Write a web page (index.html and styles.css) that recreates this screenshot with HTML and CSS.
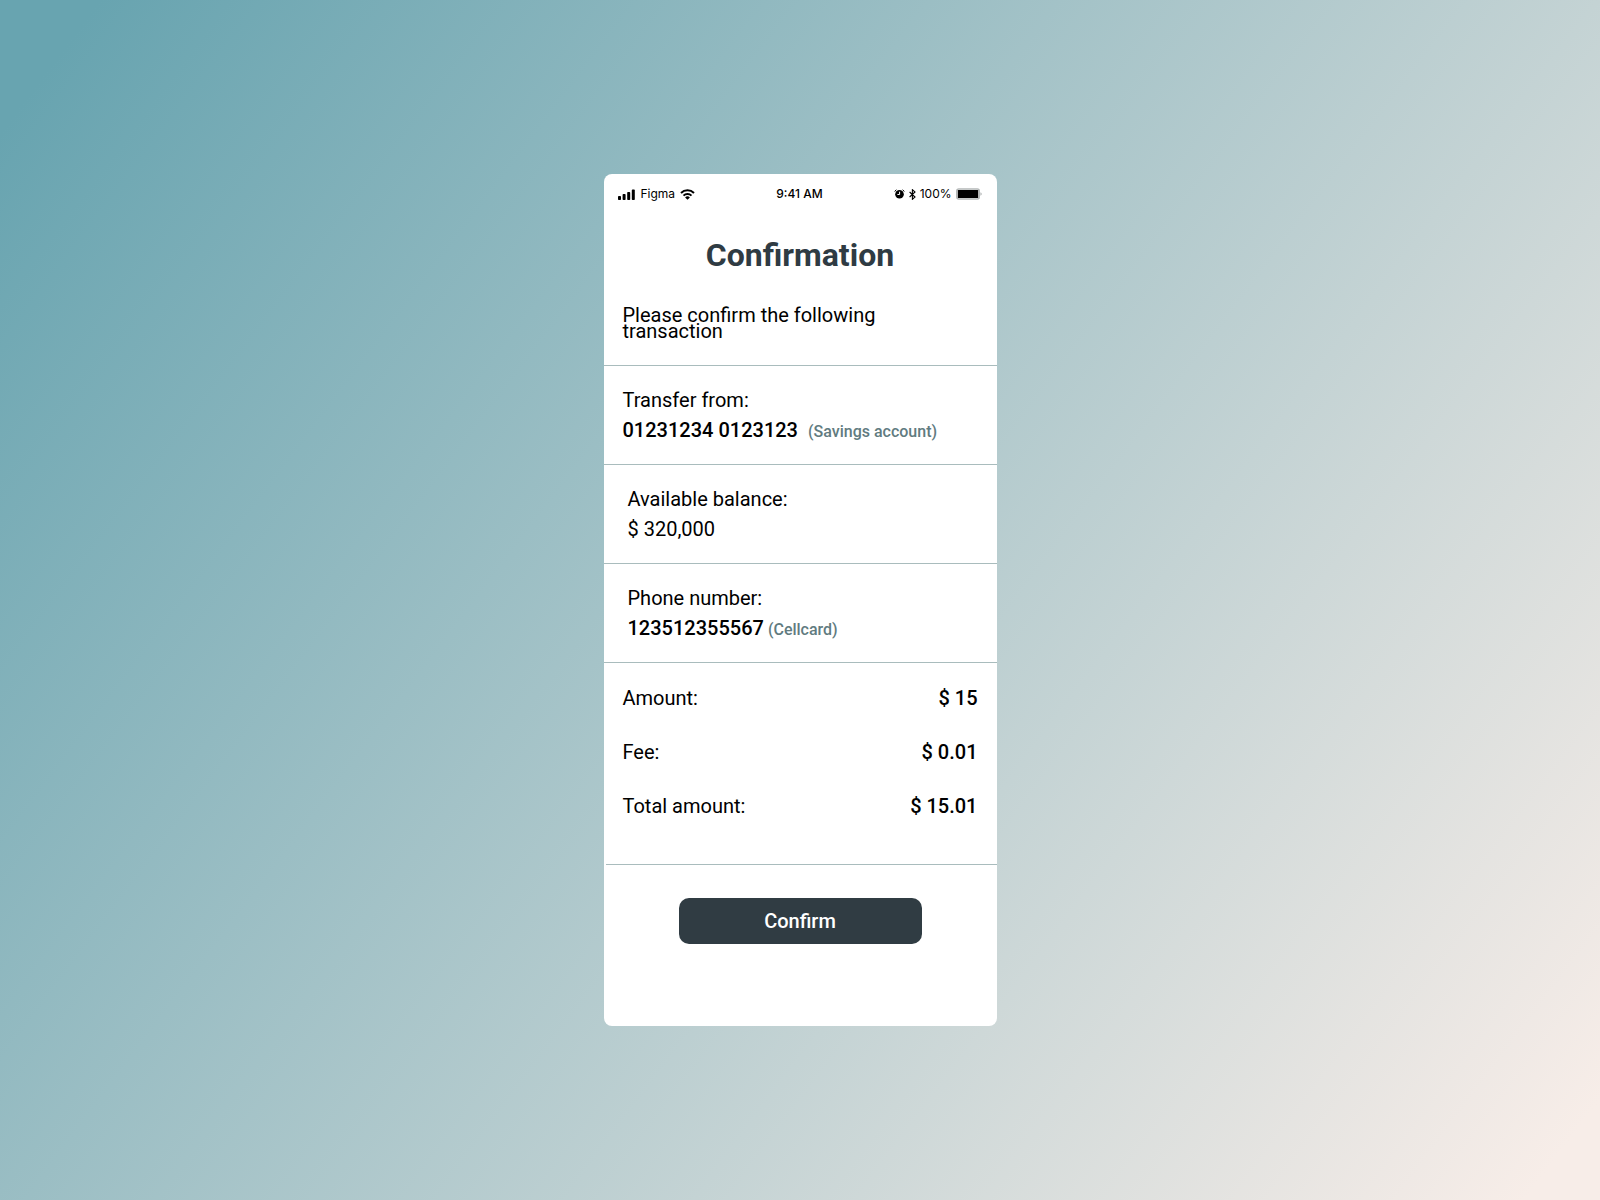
FILE: index.html
```html
<!DOCTYPE html>
<html lang="en">

<head>
    <meta charset="UTF-8">
    <meta name="viewport" content="width=device-width, initial-scale=1.0">
    <title>Confirmation</title>
    <link rel="stylesheet" href="styles.css">
</head>

<body>
    <main class="phone">
        <header class="status-bar">
            <div class="status-left">
                <svg class="signal" width="17" height="11" viewBox="0 0 17 11">
                    <rect x="0" y="7" width="3" height="4" rx="0.8" />
                    <rect x="4.6" y="5" width="3" height="6" rx="0.8" />
                    <rect x="9.2" y="3" width="3" height="8" rx="0.8" />
                    <rect x="13.8" y="0.6" width="3" height="10.4" rx="0.8" />
                </svg>
                <span>Figma</span>
                <svg class="wifi" width="15" height="11" viewBox="0 0 15 11">
                    <path d="M1 4 A9.2 9.2 0 0 1 14 4" />
                    <path d="M3.5 6.6 A5.7 5.7 0 0 1 11.5 6.6" />
                    <path class="dot" d="M5.1 8.4 A3.4 3.4 0 0 1 9.9 8.4 L7.5 10.8 Z" />
                </svg>
            </div>
            <div class="status-time">9:41 AM</div>
            <div class="status-right">
                <svg class="alarm" width="11" height="10" viewBox="0 0 11 10">
                    <circle cx="5.5" cy="5.3" r="4.3" />
                    <path class="bells" d="M0.6 2.4 L2.4 0.8 M10.4 2.4 L8.6 0.8" />
                    <path class="hands" d="M5.6 2.7 V5.5 H3.4" />
                </svg>
                <svg class="bluetooth" width="7" height="11" viewBox="0 0 7 11">
                    <path d="M0.6 3 L6 8 L3.4 10.3 V0.7 L6 3 L0.6 8" />
                </svg>
                <span>100%</span>
                <svg class="battery" width="26" height="12" viewBox="0 0 26 12">
                    <rect class="case" x="0.7" y="1" width="22.6" height="10" rx="2" />
                    <rect x="1.8" y="2" width="20.4" height="8" rx="0.6" />
                    <path class="cap" d="M24.4 4.2 Q25.8 4.8 25.8 6 Q25.8 7.2 24.4 7.8 Z" />
                </svg>
            </div>
        </header>

        <section class="intro">
            <h1>Confirmation</h1>
            <p>Please confirm the following transaction</p>
        </section>

        <section class="block">
            <div>Transfer from:</div>
            <div><b>01231234 0123123</b><span class="note note-wide">(Savings account)</span></div>
        </section>

        <section class="block indent">
            <div>Available balance:</div>
            <div>$ 320,000</div>
        </section>

        <section class="block indent">
            <div>Phone number:</div>
            <div><b>123512355567</b><span class="note">(Cellcard)</span></div>
        </section>

        <section class="totals">
            <div class="row"><span>Amount:</span><b>$ 15</b></div>
            <div class="row"><span>Fee:</span><b>$ 0.01</b></div>
            <div class="row"><span>Total amount:</span><b>$ 15.01</b></div>
        </section>

        <footer class="actions">
            <button type="button">Confirm</button>
        </footer>
    </main>
</body>

</html>
```
FILE: styles.css
```css
* {
    box-sizing: border-box;
}

body {
    margin: 0;
    min-height: 100vh;
    display: flex;
    align-items: center;
    justify-content: center;
    background: linear-gradient(127deg, #68a4b0 4%, #f7ede8 97%);
    font-family: Roboto, "Liberation Sans", sans-serif;
    font-size: 20px;
    line-height: 30px;
    color: #000;
}

b {
    font-weight: 500;
}

.phone {
    width: 393px;
    max-width: 100%;
    padding-bottom: 82px;
    background: #fff;
    border-radius: 8px;
}

/* status bar */
.status-bar {
    display: grid;
    grid-template-columns: 1fr auto 1fr;
    align-items: center;
    height: 40px;
    padding: 0 15px 0 14px;
    font-family: Inter, sans-serif;
    font-size: 12px;
    line-height: 16px;
}

.status-left,
.status-right {
    display: flex;
    align-items: center;
}

.status-left {
    gap: 5px;
}

.signal {
    margin-right: 1px;
}

.status-right {
    justify-content: flex-end;
    gap: 4px;
}

.status-time {
    font-weight: 500;
}

.wifi path {
    fill: none;
    stroke: #000;
    stroke-width: 2;
}

.wifi .dot {
    fill: #000;
    stroke: none;
}

.alarm .bells {
    fill: none;
    stroke: #000;
    stroke-width: 1;
}

.alarm .hands {
    fill: none;
    stroke: #fff;
    stroke-width: 1;
}

.bluetooth path {
    fill: none;
    stroke: #000;
    stroke-width: 1.1;
}

.battery .case {
    fill: none;
    stroke: #b4b8b8;
    stroke-width: 1.4;
}

.battery .cap {
    fill: #b4b8b8;
}

/* content */
.intro,
.block {
    border-bottom: 1px solid #a9bcbd;
}

.intro {
    padding: 21px 19px 26px;
}

h1 {
    margin: 0 0 32px;
    font-size: 32px;
    line-height: 40px;
    font-weight: 700;
    text-align: center;
    color: #2f3b43;
}

.intro p {
    margin: 0;
    padding-right: 80px;
    line-height: 16px;
}

.block {
    padding: 19px;
}

.indent {
    padding-left: 24px;
}

.note {
    margin-left: 4px;
    font-size: 16px;
    line-height: 16px;
    font-weight: 500;
    color: #617b80;
}

.note-wide {
    margin-left: 10px;
}

.totals {
    padding: 20px 19px 43px;
    display: flex;
    flex-direction: column;
    gap: 24px;
}

.row {
    display: flex;
    justify-content: space-between;
}

.actions {
    margin-left: 2px;
    padding: 33px 2px 0 0;
    border-top: 1px solid #a9bcbd;
}

button {
    display: block;
    width: 243px;
    height: 46px;
    margin: 0 auto;
    border: 0;
    border-radius: 10px;
    background: #303c43;
    color: #fff;
    font-family: inherit;
    font-size: 20px;
    font-weight: 500;
    cursor: pointer;
}
```
